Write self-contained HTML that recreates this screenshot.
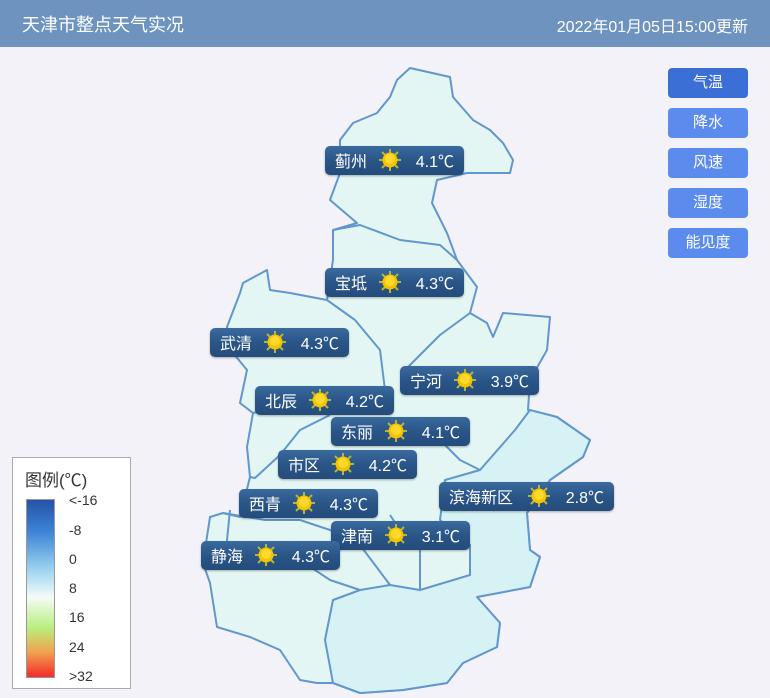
<!DOCTYPE html><html><head><meta charset="utf-8"><style>
body{margin:0;width:770px;height:698px;background:#f3f2f8;font-family:"Liberation Sans","Noto Sans CJK SC",sans-serif;position:relative;overflow:hidden}
.hd{position:absolute;left:0;top:0;width:770px;height:47px;background:#6f93bf;color:#fff}
.hd .t{position:absolute;left:22px;top:11px;font-size:18px}
.hd .d{position:absolute;right:22px;top:13px;font-size:16px}
.btn{position:absolute;left:668px;width:80px;height:30px;border-radius:4px;background:#5b8ced;color:#fff;font-size:15px;text-align:center;line-height:30px}
.lb{position:absolute;height:29px;border-radius:5px;background:linear-gradient(#3a6a9e,#2a5587 50%,#244c7c);color:#fff;font-size:16px;box-shadow:0 1px 2px rgba(0,0,0,.3)}
.lb .n{position:absolute;left:10px;top:2px}
.lb .v{position:absolute;right:10px;top:2px}
.lb svg{position:absolute;top:2px}
.lg{position:absolute;left:12px;top:457px;width:117px;height:230px;background:#fff;border:1px solid #aaa}
.lg .tt{position:absolute;left:12px;top:8px;font-size:17px;color:#333}
.bar{position:absolute;left:13px;top:41px;width:29px;height:179px;background:linear-gradient(#2553a6,#3d84d6 18%,#9fd5f1 40%,#f4fbf8 55%,#b9ef7d 72%,#f0a24f 86%,#f52a2a);border:1px solid #999;box-sizing:border-box}
.lv{position:absolute;left:56px;font-size:14px;color:#333}
</style></head><body>
<div class="hd"><span class="t">天津市整点天气实况</span><span class="d">2022年01月05日15:00更新</span></div>
<svg width="770" height="698" style="position:absolute;left:0;top:0">
<defs><g id="sun"><g stroke="#b5b53a" stroke-width="2"><line x1="12" y1="1" x2="12" y2="23"/><line x1="1" y1="12" x2="23" y2="12"/><line x1="4" y1="4" x2="20" y2="20"/><line x1="20" y1="4" x2="4" y2="20"/></g><circle cx="12" cy="12" r="7.5" fill="#f5c400"/><circle cx="12" cy="11" r="5" fill="#ffd92e"/></g></defs>
<path d="M410,68 L450,77 L453,97 L473,120 L490,130 L503,143 L513,160 L510,173 L467,173 L437,180 L432,203 L447,233 L457,260 L477,287 L470,313 L487,323 L493,337 L503,313 L550,317 L547,350 L530,380 L528,410 L557,417 L590,440 L583,457 L550,480 L527,513 L530,550 L540,557 L530,587 L477,597 L500,623 L497,647 L463,663 L447,683 L403,690 L360,693 L333,683 L317,683 L300,680 L280,650 L250,637 L217,627 L210,583 L203,563 L210,517 L223,513 L240,517 L250,477 L247,447 L253,413 L240,403 L247,370 L233,353 L227,327 L240,293 L243,283 L267,270 L270,290 L290,293 L327,300 L333,260 L333,230 L357,223 L330,200 L340,173 L340,140 L353,123 L377,113 L390,97 L397,80 Z" fill="#e3f6f3" stroke="#6197cc" stroke-width="2" stroke-linejoin="round"/>
<path d="M530,410 L515,430 L480,470 L445,480 L440,520 L470,545 L470,575 L420,590 L390,585 L360,590 L333,600 L325,640 L333,683 L360,693 L403,690 L447,683 L463,663 L497,647 L500,623 L477,597 L530,587 L540,557 L530,550 L527,513 L550,480 L583,457 L590,440 L557,417 Z" fill="#d7f2f4" stroke="#6197cc" stroke-width="2" stroke-linejoin="round"/>
<g fill="none" stroke="#6197cc" stroke-width="2" stroke-linejoin="round">
<path d="M333,230 L360,225 L400,240 L440,245 L457,260"/>
<path d="M327,300 L355,320 L380,350 L385,390"/>
<path d="M470,313 L440,335 L405,370"/>
<path d="M253,413 L290,405 L330,415"/>
<path d="M330,415 L300,430 L280,455 L255,478 L250,477"/>
<path d="M445,445 L460,460 L480,470"/>
<path d="M300,520 L330,530 L360,545 L390,585"/>
<path d="M223,513 L265,520 L300,520"/>
<path d="M300,560 L330,580 L360,590"/>
<path d="M390,515 L400,530 L420,545 L420,590"/>
<path d="M230,510 L225,560"/>
</g>
</svg>
<div class="btn" style="top:68px;background:#3b6fd6">气温</div>
<div class="btn" style="top:108px">降水</div>
<div class="btn" style="top:148px">风速</div>
<div class="btn" style="top:188px">湿度</div>
<div class="btn" style="top:228px">能见度</div>

<div class="lb" style="left:325px;top:146px;width:139px"><span class="n">蓟州</span><svg width="24" height="24" style="left:53px"><use href="#sun"/></svg><span class="v">4.1℃</span></div>
<div class="lb" style="left:325px;top:268px;width:139px"><span class="n">宝坻</span><svg width="24" height="24" style="left:53px"><use href="#sun"/></svg><span class="v">4.3℃</span></div>
<div class="lb" style="left:210px;top:328px;width:139px"><span class="n">武清</span><svg width="24" height="24" style="left:53px"><use href="#sun"/></svg><span class="v">4.3℃</span></div>
<div class="lb" style="left:400px;top:366px;width:139px"><span class="n">宁河</span><svg width="24" height="24" style="left:53px"><use href="#sun"/></svg><span class="v">3.9℃</span></div>
<div class="lb" style="left:255px;top:386px;width:139px"><span class="n">北辰</span><svg width="24" height="24" style="left:53px"><use href="#sun"/></svg><span class="v">4.2℃</span></div>
<div class="lb" style="left:331px;top:417px;width:139px"><span class="n">东丽</span><svg width="24" height="24" style="left:53px"><use href="#sun"/></svg><span class="v">4.1℃</span></div>
<div class="lb" style="left:278px;top:450px;width:139px"><span class="n">市区</span><svg width="24" height="24" style="left:53px"><use href="#sun"/></svg><span class="v">4.2℃</span></div>
<div class="lb" style="left:439px;top:482px;width:175px"><span class="n">滨海新区</span><svg width="24" height="24" style="left:88px"><use href="#sun"/></svg><span class="v">2.8℃</span></div>
<div class="lb" style="left:239px;top:489px;width:139px"><span class="n">西青</span><svg width="24" height="24" style="left:53px"><use href="#sun"/></svg><span class="v">4.3℃</span></div>
<div class="lb" style="left:331px;top:521px;width:139px"><span class="n">津南</span><svg width="24" height="24" style="left:53px"><use href="#sun"/></svg><span class="v">3.1℃</span></div>
<div class="lb" style="left:201px;top:541px;width:139px"><span class="n">静海</span><svg width="24" height="24" style="left:53px"><use href="#sun"/></svg><span class="v">4.3℃</span></div>

<div class="lg"><span class="tt">图例(℃)</span><div class="bar"></div>
<span class="lv" style="top:34px">&lt;-16</span><span class="lv" style="top:64px">-8</span><span class="lv" style="top:93px">0</span><span class="lv" style="top:122px">8</span><span class="lv" style="top:151px">16</span><span class="lv" style="top:181px">24</span><span class="lv" style="top:210px">&gt;32</span></div>
</body></html>
